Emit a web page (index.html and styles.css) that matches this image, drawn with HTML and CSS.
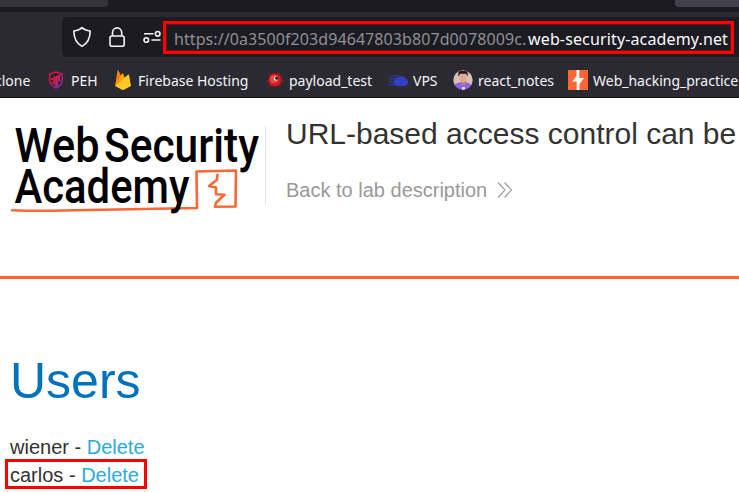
FILE: index.html
```
<!DOCTYPE html>
<html lang="en">
<head>
<meta charset="utf-8">
<title>Web Security Academy</title>
<link rel="stylesheet" href="styles.css">
</head>
<body>
<div class="browser">
  <div class="tabs"><div class="tab tab-left"></div><div class="tab tab-right"></div></div>
  <div class="toolbar">
    <div class="address">
      <svg class="controls" width="101" height="40" viewBox="0 0 101 40" fill="none" stroke="#f4f4f7" stroke-width="1.6">
        <path d="M20 10.600C18 12.600 14.500 13.600 11.800 14c.1 7 1.800 12 8.200 15.400 6.400-3.400 8.100-8.400 8.200-15.400C25.500 13.600 22 12.600 20 10.600z" stroke-linejoin="round"/>
        <rect x="48" y="19" width="14.200" height="10.300" rx="2"/>
        <path d="M50.500 19v-3.500a4.600 4.600 0 0 1 9.200 0V19"/>
        <path d="M82 16.800h9.500M89.500 23h9"/>
        <circle cx="95.700" cy="16.800" r="2.300"/>
        <circle cx="84.300" cy="23" r="2.300"/>
      </svg>
      <div class="url"><span class="sub">https://0a3500f203d94647803b807d0078009c.</span><span class="domain">web-security-academy.net</span></div>
    </div>
  </div>
  <nav class="bookmarks">
    <span class="clone">clone</span>
    <span class="icon"><svg width="16" height="18" viewBox="0 0 16 18"><defs><linearGradient id="shield" x1="0" y1="0" x2="1" y2="1"><stop offset=".35" stop-color="#d5183f"/><stop offset="1" stop-color="#6038b8"/></linearGradient></defs><path d="M8 1l6.300 2v6c0 4-2.800 6.500-6.300 8-3.500-1.500-6.300-4-6.300-8V3z" fill="#33202f" stroke="url(#shield)" stroke-width="1.400"/><path d="M2 8l6-3 5-2-1 4 1 3-2 0-1 2 1 3-3 2-2-4-3-1 3-2z" fill="url(#shield)"/></svg></span>
    <span class="peh">PEH</span>
    <span class="icon"><svg width="16" height="20" viewBox="0 0 16 20"><path d="M0 16L2.500.5Q3 0 3.500.7L6 5.500 7.500 3 9.500 7z" fill="#f5820d"/><path d="M0 16L7.500 3 10 8z" fill="#ffa000"/><path d="M0 16L13.200 4.500q.6-.4.8.5L16 16l-7 3.700q-1 .5-2 0z" fill="#ffca28"/></svg></span>
    <span class="firebase">Firebase Hosting</span>
    <span class="icon"><svg width="18" height="18" viewBox="0 0 18 18"><path d="M2 2l3 2 2-3 2 2 4-2 1 3 3 1-1 3 2 2-3 2 0 3-4 0-2 2-2-2-4 1 0-4-3-2 3-2z" fill="#8e1719"/><circle cx="9" cy="9" r="6" fill="#d51d22"/><circle cx="8" cy="8" r="4" fill="#ef4547"/><circle cx="10" cy="7.500" r="2.200" fill="#ddd"/><circle cx="10.800" cy="7.200" r="1.600" fill="#30242b"/></svg></span>
    <span class="payload">payload_test</span>
    <span class="icon"><svg width="20" height="12" viewBox="0 0 20 12" fill="#323fc2"><path d="M9 12a4 4 0 0 1-1-7.500A6 5 0 0 1 18 4.500 4 4 0 0 1 16 12z"/><path d="M3 1h8v1.500H3zM1 4h7v1.500H1zM1 7h6v1.500H1zM0 10h8v1.500H0z" opacity=".65"/></svg></span>
    <span class="vps">VPS</span>
    <span class="icon"><svg width="20" height="20" viewBox="0 0 20 20"><clipPath id="round"><circle cx="10" cy="10" r="9.700"/></clipPath><g clip-path="url(#round)"><path d="M0 0h20v20H0z" fill="#d5c2b3"/><path d="M0 20l2-6 6-2h5l6 3v5z" fill="#8b63ea"/><path d="M8 11h5l-1 4H9z" fill="#c38165"/><ellipse cx="10" cy="7.500" rx="3.600" ry="5" fill="#e0a98c"/><path d="M5.500 6.500Q4 0 10 1q6-1 4.500 5.500L13 3.800H7z" fill="#24171e"/><path d="M9 17h3v3H9z" fill="#ded6fb"/></g></svg></span>
    <span class="react">react_notes</span>
    <span class="icon"><svg width="20" height="20" viewBox="0 0 20 20"><path d="M0 0h20v20H0z" fill="#ff6633"/><path d="M8.500 0h2.800v8h4.800L11.500 14v6H8.700v-8.500H4.200L8.500 6z" fill="#fff"/></svg></span>
    <span class="hacking">Web_hacking_practice</span>
  </nav>
</div>
<header class="lab">
  <svg class="sketch" width="232" height="46" viewBox="0 0 232 46" fill="none" stroke="#ff6633" stroke-width="2.600" stroke-linejoin="round" stroke-linecap="round">
    <path d="M3 42.200Q30 43.500 80 42l108-2-.500-36.500 39.500-1-.5 36-20.500.2 1-4 8.500-8-8.500-.5v-6.700l-7-1.500 8-6.200.5-5"/>
  </svg>
  <svg class="logo" width="266" height="120" viewBox="0 0 266 120">
    <g class="logo-text">
      <text x="14.500" y="64" textLength="85" lengthAdjust="spacingAndGlyphs">Web</text>
      <text x="104" y="64" textLength="155" lengthAdjust="spacingAndGlyphs">Security</text>
      <text x="14.500" y="105" textLength="175" lengthAdjust="spacingAndGlyphs">Academy</text>
    </g>
  </svg>
  <div class="lab-info"><h2>URL-based access control can be</h2>
    <a class="back">Back to lab description <svg width="16" height="16" viewBox="0 0 16 16" fill="none" stroke="#999" stroke-width="1.100"><path d="M1 .5L8 8l-7 7.500M7.500.5L14.500 8l-7 7.500"/></svg></a>
  </div>
</header>
<main>
  <h1>Users</h1>
  <div class="user">wiener - <a>Delete</a></div>
  <div class="user marked">carlos - <a>Delete</a></div>
</main>
</body>
</html>
```
FILE: styles.css
```
* { box-sizing: border-box; }
body { margin: 0; width: 739px; height: 493px; overflow: hidden; background: #fff; font-family: "Liberation Sans", Arial, sans-serif; color: #333332; }
.browser { height: 98px; background: #2b2a33; border-bottom: 1px solid #0c0c0d; font-family: "Noto Sans", "Open Sans", sans-serif; color: #f5f5f8; }
.tabs { height: 12px; background: #1c1b22; display: flex; justify-content: space-between; }
.tab { height: 7px; }
.tab-left { width: 108px; background: #35343a; border-radius: 0 0 4px 0; }
.tab-right { width: 64px; background: #42414d; border-radius: 0 0 0 4px; }
.toolbar { height: 45px; padding: 5px 0 0 62px; }
.address { height: 40px; display: flex; align-items: flex-start; background: #1c1b22; border-radius: 5px 0 0 5px; }
.controls { flex: none; }
.url { width: 571px; height: 33px; margin-top: 4px; border: 3px solid #f00; padding-left: 8px; line-height: 30px; font-size: 16px; white-space: nowrap; display: flex; outline: 1px solid #65151a; outline-offset: -4px; }
.sub { width: 354px; color: #8f8f94; letter-spacing: .08px; }
.domain { color: #fbfbfe; letter-spacing: .14px; }
.bookmarks { height: 40px; padding-top: 5px; display: grid; grid-template-columns: 48px 23px 44px 23px 128px 23px 99px 25px 40px 25px 90px 25px 146px; align-items: center; white-space: nowrap; font-size: 14px; line-height: 24px; }
.bookmarks > span:not(.icon) { padding-top: 2px; }
.icon { display: flex; align-items: center; }
.clone { margin-left: -5px; }
.lab { height: 181px; border-bottom: 3px solid #ff6633; display: grid; grid-template-columns: 266px 1fr; position: relative; }
.logo { position: relative; }
.logo-text { font: 500 48px Roboto, sans-serif; fill: #000; }
.sketch { position: absolute; left: 9px; top: 70px; }
.lab-info { margin-top: 28px; height: 78px; margin-left: -1px; padding-left: 20px; border-left: 1px solid #e2e2e2; white-space: nowrap; }
h2 { margin: -10px 0 0; font-size: 30px; line-height: 36px; font-weight: 400; }
.back { margin-top: 26px; height: 24px; display: flex; align-items: center; gap: 10px; color: #999; font-size: 20px; }
main { padding-left: 10px; }
h1 { margin: 0; padding-top: 74px; font-size: 50px; line-height: 57px; font-weight: 400; color: #0071bc; }
.user { margin-top: 24px; height: 27px; font-size: 20px; line-height: 27px; white-space: nowrap; }
.user a { color: #29abe2; }
.marked { width: 142px; height: 30px; margin: -2px 0 0 -5px; padding-left: 2px; border: 3px solid #f00; line-height: 26px; }
```
